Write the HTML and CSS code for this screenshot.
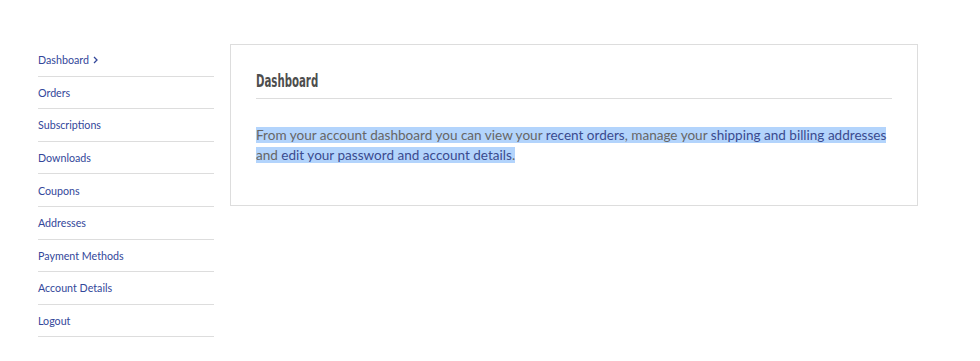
FILE: index.html
```html
<!DOCTYPE html>
<html>
<head>
  <title>My Account</title>
  <link rel="stylesheet" href="styles.css">
</head>
<body>
  <div class="account">
    <!-- Account navigation -->
    <ul class="account-nav">
      <li><a href="#">Dashboard <svg class="chevron" width="5" height="8" viewBox="0 0 5 8"><path d="M1 1l3 3-3 3" fill="none" stroke="currentColor" stroke-width="1.3"/></svg></a></li>
      <li><a href="#">Orders</a></li>
      <li><a href="#">Subscriptions</a></li>
      <li><a href="#">Downloads</a></li>
      <li><a href="#">Coupons</a></li>
      <li><a href="#">Addresses</a></li>
      <li><a href="#">Payment Methods</a></li>
      <li><a href="#">Account Details</a></li>
      <li><a href="#">Logout</a></li>
    </ul>

    <!-- Account content -->
    <div class="account-content">
      <h2 class="account-title"><span class="narrow">Dashboard</span></h2>
      <p class="account-intro"><span class="selected">From your account dashboard you can view your <a href="#">recent orders</a>, manage your <a href="#">shipping and billing addresses</a> and <a href="#">edit your password and account details</a>.</span></p>
    </div>
  </div>
</body>
</html>
```

FILE: styles.css
```css
body {
  margin: 0;
  background-color: #fff;
  font-family: Lato, "Open Sans", sans-serif;
}
.account {
  display: flex;
  align-items: flex-start;
  gap: 16px;
  padding: 44px 0 0 38px;
}
/* Styles for the navigation */
.account-nav {
  list-style: none;
  margin: 0;
  padding: 0;
  width: 176px;
  flex-shrink: 0;
}
.account-nav li {
  border-bottom: 1px solid #ddd;
  height: 31.6px;
  display: flex;
  align-items: center;
}
.account-nav a {
  color: #33479a;
  font-size: 10.7px;
  text-decoration: none;
}
.chevron {
  margin-left: 1px;
}
/* Styles for the content box */
.account-content {
  width: 636px;
  border: 1px solid #ddd;
  padding: 25px 25px 40px 25px;
}
.account-title {
  margin: 0 0 26px 0;
  padding-bottom: 6px;
  border-bottom: 1px solid #ddd;
  font-family: "DejaVu Sans", sans-serif;
  font-weight: bold;
  font-size: 17px;
  line-height: 22px;
  color: #4d4d4d;
}
.narrow {
  display: inline-block;
  transform: scaleX(0.6);
  transform-origin: left center;
}
.account-intro {
  margin: 0;
  font-size: 13.55px;
  line-height: 20px;
  color: #666;
}
.account-intro a {
  color: #3a4b8f;
  text-decoration: none;
}
.selected {
  background-color: #b3d4fc;
}
```
